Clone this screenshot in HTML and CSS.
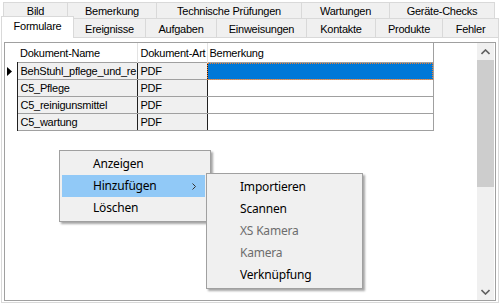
FILE: index.html
```html
<!DOCTYPE html>
<html lang="de">
<head>
    <meta charset="UTF-8">
    <title>Formulare</title>
    <link rel="stylesheet" href="styles.css">
</head>
<body>
    <div class="tabstrip">
        <div class="tab-row row-back">
            <div class="tab w-bild">Bild</div>
            <div class="tab w-bem">Bemerkung</div>
            <div class="tab w-tech">Technische Prüfungen</div>
            <div class="tab w-wart">Wartungen</div>
            <div class="tab w-check">Geräte-Checks</div>
        </div>
        <div class="tab-row row-front">
            <div class="tab active w-form">Formulare</div>
            <div class="tab w-ereig">Ereignisse</div>
            <div class="tab w-aufg">Aufgaben</div>
            <div class="tab w-einw">Einweisungen</div>
            <div class="tab w-kont">Kontakte</div>
            <div class="tab w-prod">Produkte</div>
            <div class="tab w-fehl">Fehler</div>
        </div>
    </div>

    <div class="page">
        <div class="grid-box">
            <div class="grid-area">
                <table class="grid">
                    <colgroup>
                        <col class="c-head">
                        <col class="c-name">
                        <col class="c-art">
                        <col class="c-bem">
                    </colgroup>
                    <thead>
                        <tr>
                            <th class="corner"></th>
                            <th>Dokument-Name</th>
                            <th>Dokument-Art</th>
                            <th class="last">Bemerkung</th>
                        </tr>
                    </thead>
                    <tbody>
                        <tr>
                            <td class="rowhead">
                                <svg width="5" height="9" viewBox="0 0 5 9"><path d="M0 0 L5 4.5 L0 9 Z" fill="#000"/></svg>
                            </td>
                            <td class="ro">BehStuhl_pflege_und_re</td>
                            <td class="ro">PDF</td>
                            <td class="sel"></td>
                        </tr>
                        <tr>
                            <td class="rowhead"></td>
                            <td class="ro">C5_Pflege</td>
                            <td class="ro">PDF</td>
                            <td></td>
                        </tr>
                        <tr>
                            <td class="rowhead"></td>
                            <td class="ro">C5_reinigunsmittel</td>
                            <td class="ro">PDF</td>
                            <td></td>
                        </tr>
                        <tr>
                            <td class="rowhead"></td>
                            <td class="ro">C5_wartung</td>
                            <td class="ro">PDF</td>
                            <td></td>
                        </tr>
                    </tbody>
                </table>
            </div>
            <div class="scrollbar">
                <div class="sb-btn">
                    <svg width="9" height="6" viewBox="0 0 9 6"><path d="M0.5 5 L4.5 1 L8.5 5" fill="none" stroke="#606060" stroke-width="1.6"/></svg>
                </div>
                <div class="sb-thumb"></div>
                <div class="sb-track"></div>
                <div class="sb-btn">
                    <svg width="9" height="6" viewBox="0 0 9 6"><path d="M0.5 1 L4.5 5 L8.5 1" fill="none" stroke="#606060" stroke-width="1.6"/></svg>
                </div>
            </div>
        </div>
    </div>

    <div class="menu menu-main">
        <div class="item">Anzeigen</div>
        <div class="item hot">Hinzufügen
            <svg class="arrow" width="4" height="7" viewBox="0 0 4 7"><path d="M0.5 0.5 L3.5 3.5 L0.5 6.5" fill="none" stroke="#333" stroke-width="1"/></svg>
        </div>
        <div class="item">Löschen</div>
    </div>

    <div class="menu menu-sub">
        <div class="item">Importieren</div>
        <div class="item">Scannen</div>
        <div class="item off">XS Kamera</div>
        <div class="item off">Kamera</div>
        <div class="item">Verknüpfung</div>
    </div>
</body>
</html>
```

FILE: styles.css
```css
body {
    margin: 0;
    width: 500px;
    height: 305px;
    background-color: #fff;
    font-family: 'Liberation Sans', Arial, sans-serif;
    font-size: 11px;
    letter-spacing: -0.25px;
    color: #000;
    overflow: hidden;
    position: relative;
}

/* tab strip */
.tabstrip {
    height: 37px;
    display: flex;
    flex-direction: column;
}
.tab-row {
    display: flex;
}
.row-back {
    margin: 2px 0 0 3px;
    height: 16px;
}
.row-front {
    height: 19px;
    align-items: flex-start;
}
.tab {
    box-sizing: border-box;
    background-color: #f0f0f0;
    border: 1px solid #d9d9d9;
    border-left: none;
    text-align: center;
    line-height: 17px;
    white-space: nowrap;
}
.row-back .tab {
    height: 17px;
}
.row-back .tab:first-child {
    border-left: 1px solid #d9d9d9;
}
.row-front .tab {
    height: 19px;
    line-height: 20px;
    border-bottom: none;
}
.tab.active {
    background-color: #fff;
    border-left: 1px solid #d9d9d9;
    height: 22px;
    line-height: 19px;
    margin: -2px 0 -1px 1px;
    position: relative;
    z-index: 2;
}
.w-bild { width: 65px; }
.w-bem { width: 89px; }
.w-tech { width: 145px; }
.w-wart { width: 88px; }
.w-check { width: 105px; }
.w-form { width: 73px; }
.w-ereig { width: 72px; }
.w-aufg { width: 71px; }
.w-einw { width: 90px; }
.w-kont { width: 69px; }
.w-prod { width: 67px; }
.w-fehl { width: 56px; }

/* tab page */
.page {
    box-sizing: border-box;
    margin-left: 1px;
    width: 498px;
    height: 266px;
    border: 1px solid #d9d9d9;
    background-color: #fff;
    padding: 4px 2px 1px 2px;
}
.grid-box {
    box-sizing: border-box;
    height: 259px;
    border: 1px solid #a0a0a0;
    display: flex;
}
.grid-area {
    flex: 1;
}
.scrollbar {
    width: 17px;
    background-color: #f0f0f0;
    display: flex;
    flex-direction: column;
    margin-right: 1px;
}
.sb-btn {
    height: 17px;
    display: flex;
    align-items: center;
    justify-content: center;
}
.sb-thumb {
    height: 127px;
    background-color: #cdcdcd;
}
.sb-track {
    flex: 1;
}

/* data grid */
.grid {
    border-collapse: collapse;
    table-layout: fixed;
    width: 428px;
}
.c-head { width: 12px; }
.c-name { width: 120px; }
.c-art { width: 70px; }
.c-bem { width: 226px; }
.grid th {
    height: 19px;
    padding: 0 0 0 3px;
    font-weight: normal;
    text-align: left;
    border-right: 1px solid #e3e3e3;
    white-space: nowrap;
    overflow: hidden;
}
.grid th.corner {
    padding: 0;
    border-right: none;
}
.grid th.last {
    padding-left: 2px;
    border-right: 1px solid #a0a0a0;
}
.grid td {
    height: 16px;
    padding: 0 0 0 3px;
    border-top: 1px solid #a0a0a0;
    border-bottom: 1px solid #a0a0a0;
    border-right: 1px solid #a0a0a0;
    white-space: nowrap;
    overflow: hidden;
}
.grid td.rowhead {
    padding: 0 0 0 2px;
    border-top: none;
    border-bottom: none;
    border-right: 1px solid #202020;
    background-color: #fff;
    vertical-align: middle;
}
.grid td.rowhead svg {
    display: block;
}
.grid td.ro {
    background-color: #f0f0f0;
    border-right: 1px solid #202020;
}
.grid td.sel {
    background-color: #0078d7;
    outline: 1px dotted #f08030;
    outline-offset: -1px;
}

/* context menus */
.menu {
    position: absolute;
    box-sizing: border-box;
    background-color: #f0f0f0;
    border: 1px solid #a0a0a0;
    padding: 2px;
    box-shadow: 2px 2px 2px rgba(0, 0, 0, 0.35);
    font-family: 'Noto Sans', 'Open Sans', sans-serif;
    font-size: 12px;
    letter-spacing: -0.2px;
    z-index: 5;
}
.menu-main {
    left: 59px;
    top: 150px;
    width: 152px;
}
.menu-sub {
    left: 206px;
    top: 173px;
    width: 157px;
}
.item {
    height: 22px;
    line-height: 22px;
    padding-left: 31px;
    position: relative;
    white-space: nowrap;
}
.item.hot {
    background-color: #91c9f7;
    margin-right: 3px;
}
.item.off {
    color: #6d6d6d;
}
.arrow {
    position: absolute;
    right: 9px;
    top: 8px;
}
```
